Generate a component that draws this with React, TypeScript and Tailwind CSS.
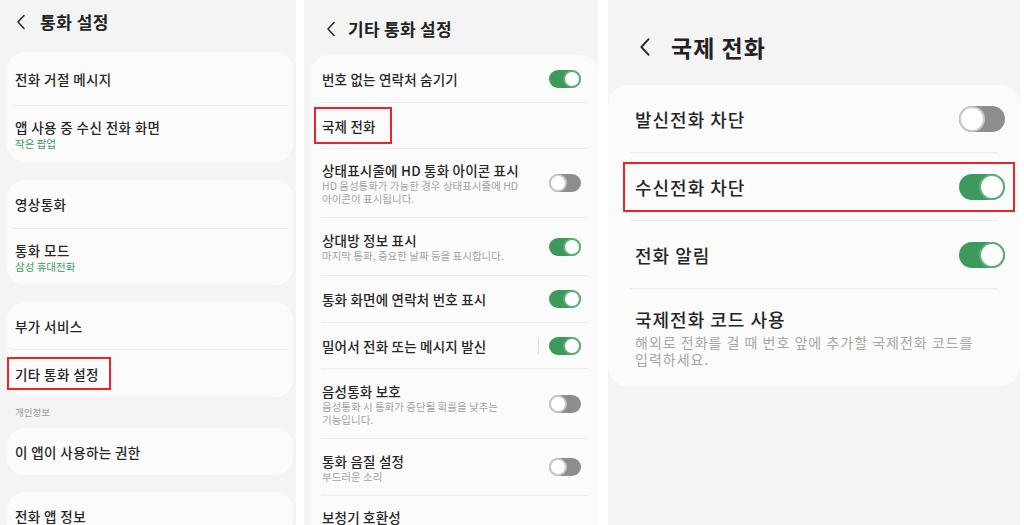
import React from "react";

type Size = "sm" | "lg";

function Toggle({ on, size = "sm" }: { on: boolean; size?: Size }) {
  const track =
    size === "sm" ? "w-[32px] h-[18px]" : "w-[46px] h-[26px]";
  const knob =
    size === "sm" ? "w-[18px] h-[18px] border-[2px]" : "w-[26px] h-[26px] border-[2px]";
  return (
    <div
      className={`${track} rounded-full flex items-center shrink-0 ${
        on ? "justify-end bg-[#3e9a5c]" : "justify-start bg-[#8d8d8d]"
      }`}
    >
      <div
        className={`${knob} rounded-full bg-white ${
          on ? "border-[#5fae79]" : "border-[#c9c9c9]"
        }`}
      />
    </div>
  );
}

function Chevron({ className }: { className: string }) {
  return (
    <svg viewBox="0 0 10 16" className={className} fill="none">
      <polyline
        points="8,1.5 2,8 8,14.5"
        stroke="#2a2a2a"
        strokeWidth="1.6"
        strokeLinecap="round"
        strokeLinejoin="round"
      />
    </svg>
  );
}

function Divider({ className = "" }: { className?: string }) {
  return <div className={`h-px bg-[#ececec] ${className}`} />;
}

/* ---------- panel 1 ---------- */

const t1 = "text-[13.5px] leading-[18px] tracking-[0.4px] font-medium text-[#262626]";

function Row1({
  title,
  sub,
  h,
  boxed,
}: {
  title: string;
  sub?: string;
  h: string;
  boxed?: boolean;
}) {
  return (
    <div className={`${h} flex items-center pl-[8px]`}>
      {boxed ? (
        <div className={`ml-[-8px] border-2 border-[#e8262a] pl-[6px] pr-[10px] h-[33px] flex items-center ${t1}`}>
          {title}
        </div>
      ) : (
        <div className="flex flex-col">
          <span className={t1}>{title}</span>
          {sub && (
            <span className="text-[10.5px] leading-[15px] text-[#3f9a5f]">{sub}</span>
          )}
        </div>
      )}
    </div>
  );
}

function Panel1() {
  return (
    <div className="w-[296px] shrink-0 bg-[#f4f4f4]">
      <div className="h-[52px] flex items-start pt-[12px] pl-[16px] gap-[14px]">
        <Chevron className="w-[10px] h-[16px] mt-[2px]" />
        <span className="text-[17px] leading-[20px] tracking-[0.5px] font-bold text-[#222]">
          통화 설정
        </span>
      </div>
      <div className="ml-[7px] w-[286px]">
        <div className="bg-[#fbfbfb] rounded-[18px]">
          <Row1 title="전화 거절 메시지" h="h-[53px]" />
          <Divider className="mx-[5px]" />
          <Row1 title="앱 사용 중 수신 전화 화면" sub="작은 팝업" h="h-[56px]" />
        </div>
        <div className="h-[18px]" />
        <div className="bg-[#fbfbfb] rounded-[18px]">
          <Row1 title="영상통화" h="h-[48px]" />
          <Divider className="mx-[5px]" />
          <Row1 title="통화 모드" sub="삼성 휴대전화" h="h-[56px]" />
        </div>
        <div className="h-[17px]" />
        <div className="bg-[#fbfbfb] rounded-[18px]">
          <Row1 title="부가 서비스" h="h-[47px]" />
          <Divider className="mx-[5px]" />
          <Row1 title="기타 통화 설정" h="h-[47px]" boxed />
        </div>
        <div className="h-[31px] flex items-center pl-[8px] text-[9.5px] text-[#9a9a9a]">
          개인정보
        </div>
        <div className="bg-[#fbfbfb] rounded-[18px]">
          <Row1 title="이 앱이 사용하는 권한" h="h-[47px]" />
        </div>
        <div className="h-[17px]" />
        <div className="bg-[#fbfbfb] rounded-[18px]">
          <Row1 title="전화 앱 정보" h="h-[48px]" />
        </div>
      </div>
    </div>
  );
}

/* ---------- panel 2 ---------- */

const t2 = "text-[13.5px] leading-[18px] tracking-[0.2px] font-medium text-[#262626]";

function Row2({
  title,
  sub,
  h,
  toggle,
  boxed,
  bar,
}: {
  title: string;
  sub?: string[];
  h: string;
  toggle?: boolean;
  boxed?: boolean;
  bar?: boolean;
}) {
  return (
    <div className={`${h} flex items-center justify-between pl-[11px] pr-[17px]`}>
      {boxed ? (
        <div className={`ml-[-8px] border-2 border-[#e8262a] pl-[6px] pr-[14px] h-[37px] flex items-center ${t2}`}>
          {title}
        </div>
      ) : (
        <div className="flex flex-col">
          <span className={t2}>{title}</span>
          {sub &&
            sub.map((s) => (
              <span key={s} className="text-[10.5px] leading-[13px] text-[#a3a3a3]">
                {s}
              </span>
            ))}
        </div>
      )}
      {toggle !== undefined && (
        <div className="flex items-center gap-[10px]">
          {bar && <div className="w-px h-[16px] bg-[#dcdcdc]" />}
          <Toggle on={toggle} />
        </div>
      )}
    </div>
  );
}

function Panel2() {
  return (
    <div className="ml-[8px] w-[294px] shrink-0 bg-[#f4f4f4]">
      <div className="h-[55px] flex items-start pt-[19px] pl-[22px] gap-[12px]">
        <Chevron className="w-[10px] h-[16px] mt-[2px]" />
        <span className="text-[17px] leading-[20px] tracking-[0.3px] font-bold text-[#222]">
          기타 통화 설정
        </span>
      </div>
      <div className="ml-[7px] w-[287px] bg-[#fbfbfb] rounded-t-[18px]">
        <Row2 title="번호 없는 연락처 숨기기" h="h-[47px]" toggle={true} />
        <Divider className="mx-[10px]" />
        <Row2 title="국제 전화" h="h-[45px]" boxed />
        <Divider className="mx-[10px]" />
        <Row2
          title="상태표시줄에 HD 통화 아이콘 표시"
          sub={["HD 음성통화가 가능한 경우 상태표시줄에 HD", "아이콘이 표시됩니다."]}
          h="h-[68px]"
          toggle={false}
        />
        <Divider className="mx-[10px]" />
        <Row2
          title="상대방 정보 표시"
          sub={["마지막 통화, 중요한 날짜 등을 표시합니다."]}
          h="h-[57px]"
          toggle={true}
        />
        <Divider className="mx-[10px]" />
        <Row2 title="통화 화면에 연락처 번호 표시" h="h-[46px]" toggle={true} />
        <Divider className="mx-[10px]" />
        <Row2 title="밀어서 전화 또는 메시지 발신" h="h-[45px]" toggle={true} bar />
        <Divider className="mx-[10px]" />
        <Row2
          title="음성통화 보호"
          sub={["음성통화 시 통화가 중단될 확률을 낮추는", "기능입니다."]}
          h="h-[69px]"
          toggle={false}
        />
        <Divider className="mx-[10px]" />
        <Row2 title="통화 음질 설정" sub={["부드러운 소리"]} h="h-[56px]" toggle={false} />
        <Divider className="mx-[10px]" />
        <div className="h-[40px] flex justify-between pl-[11px] pr-[17px] pt-[12px]">
          <span className={t2}>보청기 호환성</span>
          <div className="mt-[20px]">
            <Toggle on={false} />
          </div>
        </div>
      </div>
    </div>
  );
}

/* ---------- panel 3 ---------- */

const t3 = "text-[18px] leading-[24px] tracking-[1px] font-medium text-[#262626]";

function Panel3() {
  return (
    <div className="ml-[10px] w-[412px] shrink-0 bg-[#f4f4f4]">
      <div className="h-[85px] flex items-start pt-[33px] pl-[31px] gap-[20px]">
        <Chevron className="w-[12px] h-[20px] mt-[4px]" />
        <span className="text-[23px] leading-[28px] tracking-[1px] font-bold text-[#222]">
          국제 전화
        </span>
      </div>
      <div className="bg-[#fbfbfb] rounded-[20px]">
        <div className="h-[67px] flex items-center justify-between pl-[27px] pr-[15px]">
          <span className={t3}>발신전화 차단</span>
          <Toggle on={false} size="lg" />
        </div>
        <Divider className="mx-[22px]" />
        <div className="h-[67px] flex items-center pl-[15px] pr-[5px]">
          <div className="w-full h-[50px] border-2 border-[#e8262a] flex items-center justify-between pl-[10px] pr-[8px]">
            <span className={t3}>수신전화 차단</span>
            <Toggle on={true} size="lg" />
          </div>
        </div>
        <Divider className="mx-[22px]" />
        <div className="h-[67px] flex items-center justify-between pl-[27px] pr-[15px]">
          <span className={t3}>전화 알림</span>
          <Toggle on={true} size="lg" />
        </div>
        <Divider className="mx-[22px]" />
        <div className="h-[97px] flex flex-col pl-[27px] pt-[18px]">
          <span className={t3}>국제전화 코드 사용</span>
          <span className="mt-[3px] text-[14px] leading-[17px] tracking-[1px] text-[#a6a6a6]">
            해외로 전화를 걸 때 번호 앞에 추가할 국제전화 코드를
          </span>
          <span className="text-[14px] leading-[17px] tracking-[1px] text-[#a6a6a6]">
            입력하세요.
          </span>
        </div>
      </div>
    </div>
  );
}

export default function App() {
  return (
    <div className="w-[1024px] h-[525px] overflow-hidden bg-white flex font-['Noto_Sans_CJK_KR','Noto_Sans',sans-serif]">
      <Panel1 />
      <Panel2 />
      <Panel3 />
    </div>
  );
}
